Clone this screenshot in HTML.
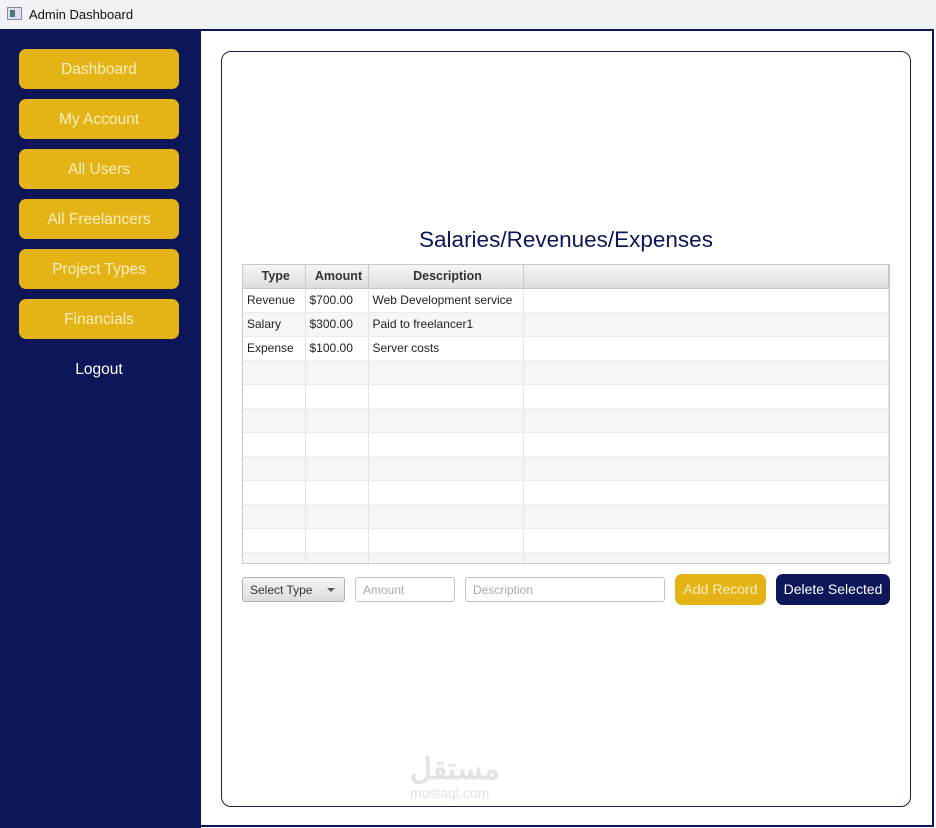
<!DOCTYPE html>
<html><head><style>
*{box-sizing:border-box;margin:0;padding:0}
body{width:936px;height:828px;position:relative;background:#fff;font-family:"Liberation Sans",sans-serif;overflow:hidden}
.title{position:absolute;left:0;top:0;width:936px;height:29px;background:#f0f3f5;font-size:13px;color:#111}
.title span{position:absolute;left:29px;top:7px}
.ico{position:absolute;left:7px;top:7px;width:15px;height:13px;border:1px solid #889;background:#dde}
.ico:after{content:"";position:absolute;left:2px;top:2px;width:5px;height:7px;background:#4a7a80}
.frame{position:absolute;left:0;top:29px;width:934px;height:798px;border:2px solid #0c1659;border-left:none}
.side{position:absolute;left:0;top:29px;width:201px;height:799px;background:#0c1659}
.btn{position:absolute;left:19px;width:160px;height:40px;background:#e4b417;border-radius:7px;color:#fbeebd;font-size:15.5px;text-align:center;line-height:42px}
.logout{position:absolute;left:19px;width:160px;top:361px;color:#fff;font-size:15.5px;text-align:center}
.card{position:absolute;left:221px;top:51px;width:690px;height:756px;border:1px solid #1a2050;border-radius:10px}
h1{position:absolute;left:221px;width:690px;top:227px;text-align:center;font-weight:normal;font-size:22.5px;color:#0c1659}
.tw{position:absolute;left:242px;top:264px;width:648px;height:300px;border:1px solid #c8c8c8;overflow:hidden}
table{width:646px;border-collapse:collapse;font-size:12px;color:#222;table-layout:fixed}
td,th{border-right:1px solid #e4e4e4;height:24px;padding:0 0 0 4px;text-align:left;white-space:nowrap;overflow:hidden}
th{background:linear-gradient(#f6f6f6,#dedede);font-weight:bold;text-align:center;border-right:1px solid #c8c8c8;border-bottom:1px solid #c8c8c8;font-size:12.5px;color:#333;height:23px}
tr td{border-bottom:1px solid #ececec;height:24px}
tr:nth-child(odd) td{background:#f6f6f6}
.in{position:absolute;top:577px;height:25px;border:1px solid #c4c4c4;border-radius:3px;font-size:12px;color:#aaa;padding:5px 7px}
.sel{position:absolute;left:242px;top:577px;width:103px;height:25px;border:1px solid #b0b0b0;border-radius:3px;background:linear-gradient(#f4f4f4,#dcdcdc);font-size:12px;color:#333;padding:5px 7px}
.sel:after{content:"";position:absolute;right:9px;top:10px;border:4px solid transparent;border-top:4px solid #555}
.b2{position:absolute;top:574px;height:31px;border-radius:7px;font-size:14px;text-align:center;line-height:31px}
.wm{position:absolute;left:410px;top:755px;color:#ddd;font-size:14px;opacity:.8}
</style></head><body>
<div class="title"><div class="ico"></div><span>Admin Dashboard</span></div>
<div class="frame"></div>
<div class="side"></div>
<div class="btn" style="top:49px">Dashboard</div>
<div class="btn" style="top:99px">My Account</div>
<div class="btn" style="top:149px">All Users</div>
<div class="btn" style="top:199px">All Freelancers</div>
<div class="btn" style="top:249px">Project Types</div>
<div class="btn" style="top:299px">Financials</div>
<div class="logout">Logout</div>
<div class="card"></div>
<h1>Salaries/Revenues/Expenses</h1>
<div class="tw"><table>
<colgroup><col style="width:62px"><col style="width:63px"><col style="width:155px"><col></colgroup>
<tr><th>Type</th><th>Amount</th><th>Description</th><th></th></tr>
<tr><td>Revenue</td><td>$700.00</td><td>Web Development service</td><td></td></tr>
<tr><td>Salary</td><td>$300.00</td><td>Paid to freelancer1</td><td></td></tr>
<tr><td>Expense</td><td>$100.00</td><td>Server costs</td><td></td></tr>
<tr><td></td><td></td><td></td><td></td></tr>
<tr><td></td><td></td><td></td><td></td></tr>
<tr><td></td><td></td><td></td><td></td></tr>
<tr><td></td><td></td><td></td><td></td></tr>
<tr><td></td><td></td><td></td><td></td></tr>
<tr><td></td><td></td><td></td><td></td></tr>
<tr><td></td><td></td><td></td><td></td></tr>
<tr><td></td><td></td><td></td><td></td></tr>
<tr><td></td><td></td><td></td><td></td></tr>
</table></div>
<div class="sel">Select Type</div>
<div class="in" style="left:355px;width:100px">Amount</div>
<div class="in" style="left:465px;width:200px">Description</div>
<div class="b2" style="left:675px;width:91px;background:#e4b417;color:#fbeebd">Add Record</div>
<div class="b2" style="left:776px;width:114px;background:#0c1659;color:#fff">Delete Selected</div>
<div class="wm"><div style="font-size:30px;font-weight:bold;line-height:30px">مستقل</div><div>mostaql.com</div></div>
</body></html>
